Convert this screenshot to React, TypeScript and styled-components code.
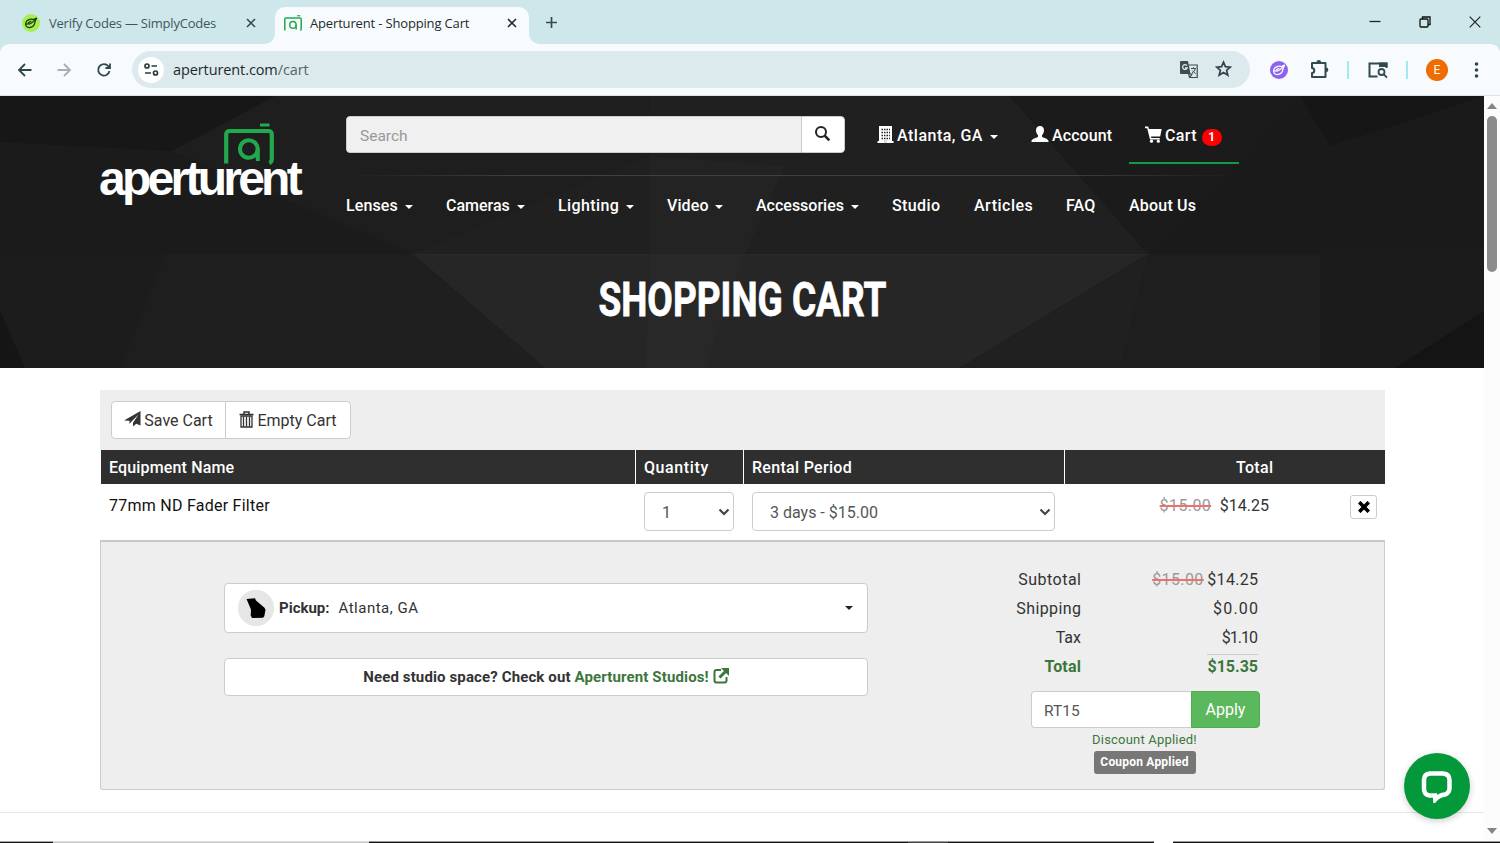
import React from "react";
import styled, { createGlobalStyle } from "styled-components";

const Global = createGlobalStyle`
  *, *::before, *::after { box-sizing: border-box; }
  html, body { margin: 0; padding: 0; overflow: hidden; background: #fff; }
  input, select, button { font: inherit; }
`;

const Window = styled.div`
  width: 1500px;
  height: 843px;
  overflow: hidden;
  display: flex;
  flex-direction: column;
  font-family: Roboto, "Liberation Sans", sans-serif;
  font-size: 16px;
  line-height: 20px;
  color: #333;
`;

const Txt = styled.span<{ $ls?: number }>`
  letter-spacing: ${(p) => p.$ls ?? 0}px;
  margin-right: ${(p) => -(p.$ls ?? 0)}px;
  white-space: nowrap;
`;

/* ---------- browser frame ---------- */

const TabStrip = styled.div`
  height: 44px;
  flex: none;
  display: flex;
  align-items: flex-end;
  background: #cee7eb;
  font-family: "Open Sans", "Noto Sans", sans-serif;
  font-size: 13px;
`;

const Tab = styled.div<{ $active?: boolean; $w: number }>`
  position: relative;
  width: ${(p) => p.$w}px;
  height: 37px;
  padding: 0 ${(p) => (p.$active ? 12 : 19)}px 5px ${(p) => (p.$active ? 9 : 22)}px;
  display: flex;
  align-items: center;
  color: ${(p) => (p.$active ? "#1f2b2e" : "#41565b")};
  background: ${(p) => (p.$active ? "#f7fbfd" : "transparent")};
  border-radius: 10px 10px 0 0;
  svg { flex: none; }
  &::before, &::after {
    content: ${(p) => (p.$active ? '""' : "none")};
    position: absolute;
    bottom: 0;
    width: 10px;
    height: 10px;
  }
  &::before { left: -10px; background: radial-gradient(circle at 0 0, transparent 9.5px, #f7fbfd 10px); }
  &::after { right: -10px; background: radial-gradient(circle at 100% 0, transparent 9.5px, #f7fbfd 10px); }
`;

const TabTitle = styled.span<{ $ls: number; $gap: number }>`
  flex: 1;
  margin-left: ${(p) => p.$gap}px;
  letter-spacing: ${(p) => p.$ls}px;
  white-space: nowrap;
`;

const StripButtons = styled.div`
  flex: 1;
  height: 44px;
  display: flex;
  align-items: center;
  padding-left: 16px;
`;

const WinButtons = styled.div`
  margin-left: auto;
  margin-right: 19px;
  display: flex;
  align-items: center;
  gap: 38px;
`;

const ToolbarBack = styled.div`
  flex: none;
  background: #cee7eb;
`;

const Toolbar = styled.div`
  height: 52px;
  display: flex;
  align-items: center;
  padding: 0 17px 0 17px;
  background: #f7fbfd;
  border-bottom: 1px solid #dbe1e5;
  border-radius: 9px 9px 0 0;
`;

const NavIcons = styled.div`
  display: flex;
  gap: 23px;
  width: 115px;
  svg:last-child { margin-left: 1px; }
`;

const UrlBar = styled.div`
  width: 1118px;
  height: 37px;
  border-radius: 19px;
  background: #dce9ed;
  display: flex;
  align-items: center;
  padding: 0 18px 0 6px;
  font-family: "Open Sans", "Noto Sans", sans-serif;
  font-size: 14.5px;
  color: #1c2a2d;
  em { font-style: normal; color: #566; }
`;

const SiteInfo = styled.div`
  width: 26px;
  height: 26px;
  border-radius: 50%;
  background: #fff;
  display: flex;
  align-items: center;
  justify-content: center;
  margin-right: 9px;
`;

const UrlActions = styled.div`
  margin-left: auto;
  display: flex;
  gap: 16px;
`;

const Extensions = styled.div`
  flex: 1;
  display: flex;
  align-items: center;
  padding-left: 20px;
`;

const ExtGap = styled.span<{ $w: number }>`
  flex: none;
  width: ${(p) => p.$w}px;
`;

const Divider = styled.i`
  width: 2px;
  height: 18px;
  background: #a5e8f5;
`;

const Avatar = styled.div`
  width: 22px;
  height: 22px;
  border-radius: 50%;
  background: #ee6c02;
  color: #fff;
  font-size: 12px;
  line-height: 22px;
  text-align: center;
`;

/* ---------- page ---------- */

const Viewport = styled.div`
  flex: 1;
  min-height: 0;
  display: flex;
`;

const Page = styled.main`
  width: 1484px;
  background: #fff;
`;

const Hero = styled.header`
  position: relative;
  height: 272px;
  background: #1b1b1b;
  color: #fff;
  overflow: hidden;
`;

const Facets = styled.svg`
  position: absolute;
  inset: 0;
`;

const HeroContent = styled.div`
  position: relative;
  display: grid;
  grid-template-columns: 246px 1fr;
  padding-left: 100px;
  height: 158px;
`;

const Logo = styled.div`
  padding-top: 27px;
  display: flex;
  flex-direction: column;
  svg { margin-left: 124px; }
`;

const LogoWord = styled.div`
  font: bold 48px/50px "Liberation Sans", Arial, sans-serif;
  letter-spacing: -3.75px;
  margin: -11px 0 0 -1px;
`;

const NavColumn = styled.div`
  padding-top: 20px;
`;

const TopRow = styled.div`
  display: flex;
  height: 59px;
  align-items: flex-start;
`;

const SearchGroup = styled.form`
  display: flex;
  width: 499px;
  height: 37px;
  border-radius: 4px;
  overflow: hidden;
`;

const SearchInput = styled.input`
  flex: 1;
  border: 1px solid #ccc;
  border-right: 0;
  border-radius: 4px 0 0 4px;
  background: #f0f0f0;
  padding: 3px 13px 0;
  font-size: 15.500px;
  outline: 0;
  &::placeholder { color: #999; opacity: 1; }
`;

const SearchButton = styled.button`
  width: 44px;
  padding: 0 2px 2px 0;
  border: 1px solid #ccc;
  border-radius: 0 4px 4px 0;
  background: #fff;
  display: flex;
  align-items: center;
  justify-content: center;
`;

const TopLink = styled.a<{ $w: number; $ml: number; $active?: boolean }>`
  width: ${(p) => p.$w}px;
  margin-left: ${(p) => p.$ml}px;
  height: 48px;
  display: flex;
  align-items: center;
  padding-bottom: 6px;
  font-weight: 500;
  padding-left: ${(p) => (p.$active ? 16 : 0)}px;
  border-bottom: 2px solid ${(p) => (p.$active ? "#139a44" : "transparent")};
  svg { margin: 0 3px 4px 0; flex: none; }
`;

const Count = styled.span`
  width: 20px;
  height: 17px;
  margin: 3px 0 0 5px;
  border-radius: 9px;
  background: #f00;
  font-size: 12px;
  font-weight: 700;
  line-height: 17px;
  text-align: center;
`;

const Caret = styled.i<{ $dark?: boolean; $push?: boolean }>`
  flex: none;
  margin-left: ${(p) => (p.$push ? "auto" : "0")};
  margin-top: ${(p) => (p.$dark ? 0 : 2)}px;
  border: 4.5px solid transparent;
  border-bottom: 0;
  border-top: 4px solid ${(p) => (p.$dark ? "#222" : "#fff")};
`;

const Rule = styled.div`
  width: 893px;
  height: 1px;
  background: linear-gradient(90deg, transparent, #404040 20%, #404040 80%, transparent);
`;

const Menu = styled.nav`
  display: flex;
  gap: 33px;
  padding-top: 20px;
  font-weight: 500;
`;

const MenuItem = styled.a<{ $w: number }>`
  width: ${(p) => p.$w}px;
  display: flex;
  align-items: center;
  justify-content: space-between;
`;

const Title = styled.h1`
  position: relative;
  margin: 16px 0 0 1px;
  text-align: center;
  font: 700 49px/60px Roboto, sans-serif;
  -webkit-text-stroke: 0.8px #fff;
  transform: scaleX(0.755);
`;

const Cart = styled.section`
  width: 1285px;
  margin: 22px 0 0 100px;
`;

const Actions = styled.div`
  height: 60px;
  background: #eee;
  padding: 11px;
  display: flex;
`;

const ActionButton = styled.button<{ $w: number; $last?: boolean }>`
  width: ${(p) => p.$w}px;
  height: 38px;
  padding: 1px 0 0;
  margin-left: ${(p) => (p.$last ? -1 : 0)}px;
  display: flex;
  align-items: center;
  justify-content: center;
  gap: 3px;
  border: 1px solid #ccc;
  border-radius: ${(p) => (p.$last ? "0 4px 4px 0" : "4px 0 0 4px")};
  background: #fff;
  color: #333;
  svg { margin-bottom: 3px; }
`;

const columns = "535px 108px 321px 1fr";

const HeadRow = styled.div`
  display: grid;
  grid-template-columns: ${columns};
  height: 34px;
  margin-left: 1px;
  color: #fff;
  font-weight: 500;
`;

const HeadCell = styled.div<{ $center?: boolean }>`
  background: #2f2f2f;
  padding: 8px 8px 0;
  border-right: 1px solid #fff;
  text-align: ${(p) => (p.$center ? "center" : "left")};
  &:last-child { border-right: 0; padding-left: 67px; }
`;

const ItemRow = styled.div`
  display: grid;
  grid-template-columns: ${columns};
  height: 56px;
  margin-left: 1px;
`;

const ItemCell = styled.div`
  padding: 8px 10px 0 8px;
`;

const ItemName = styled.div`
  padding-top: 4px;
  color: #111;
`;

const SelectBox = styled.div`
  height: 39px;
  border: 1px solid #ccc;
  border-radius: 4px;
  padding: 2px 3px 0 17px;
  display: flex;
  align-items: center;
  justify-content: space-between;
  color: #555;
  svg { margin-bottom: 2px; }
`;

const PriceCell = styled.div`
  display: flex;
  justify-content: flex-end;
  padding: 12px 8px 0 0;
`;

const Old = styled.s`
  color: #999;
  text-decoration: line-through #f0706c 1.5px;
  white-space: nowrap;
`;

const NewPrice = styled(Txt)`
  margin-left: 9px;
`;

const RemoveButton = styled.button`
  width: 27px;
  height: 24px;
  padding: 0;
  margin: -1px 0 0 81px;
  border: 1px solid #ccc;
  border-radius: 3px;
  background: #fff;
  display: flex;
  align-items: center;
  justify-content: center;
`;

const Panel = styled.div`
  height: 250px;
  border: 1px solid #ccc;
  border-top: 2px solid #c8c8c8;
  border-radius: 0 0 3px 3px;
  background: #eee;
  display: flex;
`;

const Delivery = styled.div`
  width: 644px;
  margin: 41px 0 0 123px;
`;

const White = styled.div<{ $h: number }>`
  height: ${(p) => p.$h}px;
  background: #fff;
  border: 1px solid #ccc;
  border-radius: 4px;
  display: flex;
  align-items: center;
`;

const Pickup = styled(White)`
  padding: 0 14px 0 13px;
  margin-bottom: 25px;
  font-size: 15px;
  b { margin: 0 9px 0 5px; }
  span { flex: 1; letter-spacing: 0.5px; }
`;

const StateBadge = styled.div`
  width: 36px;
  height: 36px;
  border-radius: 50%;
  background: #e6e6e6;
  display: flex;
  align-items: center;
  justify-content: center;
`;

const Studios = styled(White)`
  justify-content: center;
  font-weight: 700;
  font-size: 15px;
  letter-spacing: 0.13px;
  a { color: #3c763d; margin: 0 4px 0 4px; }
  svg { margin-bottom: 3px; }
`;

const Summary = styled.div`
  width: 260px;
  margin: 24px 0 0 132px;
`;

const SumLine = styled.div<{ $total?: boolean }>`
  display: grid;
  grid-template-columns: 81px 177px;
  height: 29px;
  padding-top: 4px;
  text-align: right;
  justify-items: end;
  font-weight: ${(p) => (p.$total ? 700 : 400)};
  color: ${(p) => (p.$total ? "#3c763d" : "#333")};
  > :last-child {
    border-top: ${(p) => (p.$total ? "1px solid #ccc" : "0")};
    margin-top: ${(p) => (p.$total ? -3 : 0)}px;
    padding-top: ${(p) => (p.$total ? 2 : 0)}px;
    height: 22px;
  }
`;

const Coupon = styled.div`
  display: flex;
  width: 229px;
  height: 37px;
  margin: 9px 0 0 31px;
`;

const CouponField = styled.div`
  flex: 1;
  border: 1px solid #ccc;
  border-right: 0;
  border-radius: 4px 0 0 4px;
  background: #fff;
  color: #555;
  font-size: 15.500px;
  padding: 9px 12px;
`;

const Apply = styled.button`
  width: 69px;
  padding: 1px 0 0;
  border: 1px solid #4cae4c;
  border-radius: 0 4px 4px 0;
  background: #5cb85c;
  color: #fff;
`;

const Result = styled.div`
  width: 229px;
  margin: 3px 0 0 30px;
  display: flex;
  flex-direction: column;
  align-items: center;
  font-size: 13px;
  line-height: 18px;
  color: #3c763d;
  letter-spacing: 0.2px;
`;

const Badge = styled.div`
  width: 102px;
  height: 23px;
  margin-top: 2px;
  border-radius: 3px;
  background: #777;
  color: #fff;
  font-size: 12px;
  font-weight: 700;
  line-height: 23px;
  text-align: center;
`;

const Footer = styled.div`
  height: 1px;
  margin-top: 22px;
  background: #e7e7e7;
`;

const Chat = styled.button`
  position: fixed;
  left: 1404px;
  top: 753px;
  width: 66px;
  height: 66px;
  padding: 0;
  border: 0;
  border-radius: 50%;
  background: #03993a;
  box-shadow: 0 2px 7px rgba(0, 0, 0, 0.2);
  display: flex;
  align-items: center;
  justify-content: center;
`;

const Scrollbar = styled.div`
  width: 16px;
  background: #fcfcfc;
  display: flex;
  flex-direction: column;
  align-items: center;
  padding: 7px 0 9px;
  svg { margin-top: auto; }
  svg:first-child { margin-top: 0; }
`;

const Thumb = styled.div`
  width: 10px;
  height: 156px;
  margin-top: 7px;
  border-radius: 5px;
  background: #8b8b8b;
`;

const BottomEdge = styled.div`
  position: fixed;
  left: 0;
  top: 841px;
  width: 1500px;
  height: 2px;
  display: flex;
`;

const Edge = styled.i<{ $w: number; $a: string; $b: string }>`
  width: ${(p) => p.$w}px;
  border-top: 1px solid ${(p) => p.$a};
  background: ${(p) => p.$b};
`;

/* ---------- drawings ---------- */

const Leaf = ({ size, bg, fg }: { size: number; bg: string; fg: string }) => (
  <svg width={size} height={size} viewBox="0 0 18 18" fill="none">
    <circle cx="9" cy="9" r="9" fill={bg} />
    <path d="M14.500 4.200L11.500 5.600C9.500 4.500 6 5.300 4.600 7.200C3.200 9.100 3.400 12 5.200 13C7.700 14.300 11.400 13 12.400 10.300C12.900 8.800 12.700 7.300 14.500 4.200z" stroke={fg} strokeWidth="1.300" strokeLinejoin="round" />
    <path d="M3.500 10.300L6 9.600C7.300 11 9.500 9.300 12.500 6.300M6.500 8.600L9 7.300" stroke={fg} strokeWidth="1.200" strokeLinecap="round" />
  </svg>
);

const Camera = ({ w, h }: { w: number; h: number }) => (
  <svg width={w} height={h} viewBox="0 0 50 42" fill="none" stroke="#22a94e" preserveAspectRatio="none">
    <path d="M2.200 40.500V11.500Q2.200 8 5.700 8H44.300Q47.800 8 47.800 11.500V36Q47.800 39 45.300 40" strokeWidth="4.200" />
    <path d="M36 2h9.500" strokeWidth="3" />
    <circle cx="24.800" cy="26" r="8.800" strokeWidth="4" />
    <path d="M33.800 25v13" strokeWidth="4" />
  </svg>
);

const Close = ({ c, s = 10, w = 1.6 }: { c: string; s?: number; w?: number }) => (
  <svg width={s} height={s} viewBox="0 0 10 10" stroke={c} strokeWidth={w}><path d="M1 1l8 8M9 1L1 9" /></svg>
);

const Chevron = () => (
  <svg width="12" height="8" viewBox="0 0 12 8" fill="none" stroke="#444" strokeWidth="2.200"><path d="M1.500 1.500L6 6l4.500-4.500" /></svg>
);

const menu: [string, number, boolean, number][] = [
  ["Lenses", 67, true, 0.1], ["Cameras", 79, true, 0], ["Lighting", 76, true, 0.4], ["Video", 56, true, 0.1],
  ["Accessories", 103, true, 0], ["Studio", 49, false, 0.4], ["Articles", 59, false, 0.5], ["FAQ", 30, false, 0.2], ["About Us", 68, false, 0.2],
];

export default function App() {
  return (
    <Window>
      <Global />
      <TabStrip>
        <Tab $w={275}>
          <Leaf size={18} bg="#a5ef50" fg="#1d3a10" />
          <TabTitle $ls={-0.22} $gap={9}>Verify Codes — SimplyCodes</TabTitle>
          <Close c="#334a50" />
        </Tab>
        <Tab $active $w={254}>
          <Camera w={18} h={16} />
          <TabTitle $ls={-0.16} $gap={8}>Aperturent - Shopping Cart</TabTitle>
          <Close c="#1d2b2f" />
        </Tab>
        <StripButtons>
          <svg width="13" height="13" viewBox="0 0 13 13" stroke="#354b50" strokeWidth="1.700"><path d="M6.500 1v11M1 6.500h11" /></svg>
          <WinButtons>
            <svg width="12" height="12" viewBox="0 0 12 12" stroke="#222"><path d="M.5 5.500h11" strokeWidth="1.300" /></svg>
            <svg width="12" height="12" viewBox="0 0 12 12" fill="none" stroke="#111" strokeWidth="1.300"><rect x="1" y="3" width="8" height="8" rx="1" /><path d="M3.500 3V1H11v7.500H9" /></svg>
            <svg width="12" height="12" viewBox="0 0 12 12" stroke="#222" strokeWidth="1.200"><path d="M.7.7l10.600 10.600M11.300.7L.7 11.300" /></svg>
          </WinButtons>
        </StripButtons>
      </TabStrip>
      <ToolbarBack>
        <Toolbar>
          <NavIcons>
            <svg width="16" height="16" viewBox="0 0 16 16" fill="none" stroke="#2f474c" strokeWidth="1.800"><path d="M14.500 8H2M8 2L2 8l6 6" /></svg>
            <svg width="16" height="16" viewBox="0 0 16 16" fill="none" stroke="#a7b0b3" strokeWidth="1.800"><path d="M1.500 8H14M8 2l6 6-6 6" /></svg>
            <svg width="16" height="16" viewBox="0 0 16 16" fill="none" stroke="#2f474c" strokeWidth="1.800"><path d="M13.500 9A5.700 5.700 0 1 1 12.300 4.200L14 6M14 1.500V6H9.500" /></svg>
          </NavIcons>
          <UrlBar>
            <SiteInfo>
              <svg width="15" height="13" viewBox="0 0 15 13" fill="none" stroke="#2b3a3d" strokeWidth="1.700"><circle cx="3" cy="3" r="2" /><path d="M7.500 3H13M1 10h6" /><circle cx="11.500" cy="10" r="2" /></svg>
            </SiteInfo>
            <Txt $ls={-0.1}>aperturent.com<em>/cart</em></Txt>
            <UrlActions>
              <svg width="20" height="19" viewBox="0 0 20 19">
                <path d="M2 1h7l2.500 13H2a1 1 0 0 1-1-1V2a1 1 0 0 1 1-1z" fill="#3c4c50" />
                <path d="M9.500 5h8.700v12.500h-7.500L9.500 14M10 14h3l-2.300 3.500" fill="none" stroke="#3c4c50" strokeWidth="1.200" />
                <path d="M12 8.500h5M14.500 7.300v1.200M16.300 8.500c-.4 2-1.700 3.500-3.300 4.500M13.300 10.500l3.500 3.500" fill="none" stroke="#3c4c50" />
                <path d="M8 5.700A2.400 2.400 0 1 0 8.300 7.800H6" fill="none" stroke="#e5eff2" strokeWidth="1.200" />
              </svg>
              <svg width="17" height="17" viewBox="0 0 17 17" fill="none" stroke="#30454a" strokeWidth="1.700"><path d="M8.500 2.200l1.900 4.500 4.900.4-3.700 3.200 1.200 4.800-4.300-2.600-4.300 2.600 1.200-4.800-3.700-3.200 4.900-.4z" /></svg>
            </UrlActions>
          </UrlBar>
          <Extensions>
            <Leaf size={18} bg="#8d62ef" fg="#fff" />
            <ExtGap $w={22} />
            <svg width="19" height="19" viewBox="0 0 19 19" fill="none"><path d="M2 3h13.500v14H2v-4c3 0 3-5 0-5z" stroke="#304a4f" strokeWidth="2" strokeLinejoin="round" /><path d="M6.500 2.300a2.300 2.300 0 0 1 4.600 0zM16 7.500a2.300 2.300 0 0 1 0 4.700z" fill="#304a4f" /></svg>
            <ExtGap $w={18} />
            <Divider />
            <ExtGap $w={19} />
            <svg width="20" height="18" viewBox="0 0 20 18" fill="none" stroke="#304a4f"><path d="M9.500 15.500H1.500v-13h17V7" strokeWidth="2" /><path d="M11 1.500h8.500V6H11z" fill="#304a4f" stroke="none" /><circle cx="13.500" cy="11" r="3" strokeWidth="1.800" /><path d="M15.600 13.200l3.400 3.500" strokeWidth="1.800" /></svg>
            <ExtGap $w={18} />
            <Divider />
            <ExtGap $w={18} />
            <Avatar>E</Avatar>
            <ExtGap $w={22} />
            <svg width="13" height="18" viewBox="0 0 13 18" fill="#2f474c"><circle cx="6.500" cy="3" r="1.800" /><circle cx="6.500" cy="9" r="1.800" /><circle cx="6.500" cy="15" r="1.800" /></svg>
          </Extensions>
        </Toolbar>
      </ToolbarBack>

      <Viewport>
        <Page>
          <Hero>
            <Facets width="1484" height="272" viewBox="0 0 1484 272">
              <path d="M0 0H275L172 55L0 46z" fill="#171717" />
              <path d="M275 0H650V158H413L172 55z" fill="#1e1e1e" />
              <path d="M650 0H1010L1148 158H413L650 60z" fill="#202020" />
              <path d="M1010 0H1484V158H1148z" fill="#1a1a1a" />
              <path d="M1010 0L1148 158L1235 70L1300 0z" fill="#1b1b1b" />
              <path d="M1300 0H1484L1330 50z" fill="#161616" />
              <path d="M0 158H413L545 272H0z" fill="#1c1c1c" />
              <path d="M165 158H413V272H120z" fill="#1e1e1e" />
              <path d="M413 158L545 272H413z" fill="#1f1f1f" />
              <path d="M413 158H1148L960 272H545z" fill="#262626" />
              <path d="M650 158H745L705 272H645z" fill="#282828" />
              <path d="M650 60L785 70L745 158H650z" fill="#232323" />
              <path d="M1148 158H1320V272H960z" fill="#1e1e1e" />
              <path d="M1148 158L1120 272H960z" fill="#202020" />
              <path d="M1320 158H1484V272H1320z" fill="#1b1b1b" />
              <path d="M1484 215V272H1395z" fill="#141414" />
              <path d="M0 215L25 272H0z" fill="#151515" />
              <path d="M413 158.500H1148" stroke="#292929" />
            </Facets>
            <HeroContent>
              <Logo>
                <Camera w={50} h={42} />
                <LogoWord>aperturent</LogoWord>
              </Logo>
              <NavColumn>
                <TopRow>
                  <SearchGroup>
                    <SearchInput placeholder="Search" />
                    <SearchButton type="button">
                      <svg width="17" height="17" viewBox="0 0 17 17" fill="none" stroke="#222"><circle cx="7" cy="7" r="5" strokeWidth="2" /><path d="M10.700 10.700l4.600 4.600" strokeWidth="2.600" /></svg>
                    </SearchButton>
                  </SearchGroup>
                  <TopLink $w={121} $ml={32}>
                    <svg width="17" height="17" viewBox="0 0 17 17"><path d="M2 0h13v15h1.500v2H.5v-2H2z" fill="#fff" /><path d="M4.500 3.500h8.500M4.500 6.500h8.500M4.500 9.500h8.500M4.500 12.500h8.500" stroke="#222" strokeWidth="1.300" strokeDasharray="1.500 1" /><path d="M7 14h3v3H7z" fill="#ddd" /></svg>
                    <Txt $ls={0.5}>Atlanta, GA</Txt><Caret $push />
                  </TopLink>
                  <TopLink $w={81} $ml={33}>
                    <svg width="18" height="16" viewBox="0 0 18 16"><path d="M9 0c2.700 0 4 1.800 4 4.300 0 2-.8 3.800-2 4.900v1.500c0 .9 6.500 1.700 6.500 4.300v1H.5v-1C.5 12.400 7 11.600 7 10.700V9.200C5.800 8.100 5 6.300 5 4.300 5 1.800 6.300 0 9 0z" fill="#fff" /></svg>
                    <Txt $ls={0.1}>Account</Txt>
                  </TopLink>
                  <TopLink $w={110} $ml={17} $active>
                    <svg width="17" height="17" viewBox="0 0 17 17" fill="#fff"><path d="M0 .5h3.200L4 3h12.700l-1.500 7.500H6l.4 1.500h8.400v1.600H5L2.200 2.200H0z" /><circle cx="6.500" cy="15.200" r="1.600" /><circle cx="13.300" cy="15.200" r="1.600" /></svg>
                    <Txt $ls={0.4}>Cart</Txt><Count>1</Count>
                  </TopLink>
                </TopRow>
                <Rule />
                <Menu>
                  {menu.map(([name, w, caret, ls]) => (
                    <MenuItem key={name} $w={w}><Txt $ls={ls}>{name}</Txt>{caret && <Caret />}</MenuItem>
                  ))}
                </Menu>
              </NavColumn>
            </HeroContent>
            <Title>SHOPPING CART</Title>
          </Hero>

          <Cart>
            <Actions>
              <ActionButton $w={115}>
                <svg width="17" height="16" viewBox="0 0 17 16"><path d="M16.500 0v14.500l-4.300-1.800L9 15.500v-3.700L14.500 3.500 7.500 10.500 5.500 13V9.800L0 9.500z" fill="#333" /></svg>
                <Txt $ls={0}>Save Cart</Txt>
              </ActionButton>
              <ActionButton $w={126} $last>
                <svg width="15" height="17" viewBox="0 0 15 17" fill="none" stroke="#333"><path d="M.5 3.500h14M5 3V1h5v2" strokeWidth="1.500" /><path d="M2 5h11v11H2z" strokeWidth="1.300" /><path d="M4.500 5.500v10M7.500 5.500v10M10.500 5.500v10" strokeWidth="1.300" /></svg>
                <Txt $ls={0}>Empty Cart</Txt>
              </ActionButton>
            </Actions>
            <HeadRow>
              <HeadCell><Txt $ls={0.15}>Equipment Name</Txt></HeadCell>
              <HeadCell><Txt $ls={0.6}>Quantity</Txt></HeadCell>
              <HeadCell><Txt $ls={0.3}>Rental Period</Txt></HeadCell>
              <HeadCell $center><Txt $ls={0.3}>Total</Txt></HeadCell>
            </HeadRow>
            <ItemRow>
              <ItemCell><ItemName><Txt $ls={0.25}>77mm ND Fader Filter</Txt></ItemName></ItemCell>
              <ItemCell><SelectBox><Txt>1</Txt><Chevron /></SelectBox></ItemCell>
              <ItemCell><SelectBox><Txt $ls={0}>3 days - $15.00</Txt><Chevron /></SelectBox></ItemCell>
              <PriceCell>
                <Old><Txt $ls={0.4}>$15.00</Txt></Old>
                <NewPrice>$14.25</NewPrice>
                <RemoveButton><Close c="#000" s={12} w={3} /></RemoveButton>
              </PriceCell>
            </ItemRow>
            <Panel>
              <Delivery>
                <Pickup $h={50}>
                  <StateBadge>
                    <svg width="20" height="20" viewBox="0 0 20 20"><path d="M.5 1l8.500-.8 1 2.300 8.500 7.300 1 2-1.200 6.400-1.300 1.500-11 .3-1.300-2.500.3-6z" fill="#000" /></svg>
                  </StateBadge>
                  <b>Pickup:</b><span>Atlanta, GA</span><Caret $dark />
                </Pickup>
                <Studios $h={38}>
                  <Txt $ls={0.13}>Need studio space? Check out</Txt><a>Aperturent Studios!</a>
                  <svg width="16" height="16" viewBox="0 0 16 16" fill="none" stroke="#3c763d"><path d="M8 2H3.500Q1.500 2 1.500 4v8.500q0 2 2 2h8q2 0 2-2V9" strokeWidth="2" /><path d="M6.500 9.500L13 3" strokeWidth="3" /><path d="M8 0H16v8z" fill="#3c763d" stroke="none" /></svg>
                </Studios>
              </Delivery>
              <Summary>
                <SumLine><Txt $ls={0.5}>Subtotal</Txt><span><Old><Txt $ls={0.4}>$15.00</Txt></Old> <Txt $ls={0.3}>$14.25</Txt></span></SumLine>
                <SumLine><Txt $ls={0.4}>Shipping</Txt><Txt $ls={1.2}>$0.00</Txt></SumLine>
                <SumLine><Txt $ls={0}>Tax</Txt><Txt $ls={-1}>$1.10</Txt></SumLine>
                <SumLine $total><Txt $ls={0.2}>Total</Txt><span>$15.35</span></SumLine>
                <Coupon><CouponField>RT15</CouponField><Apply>Apply</Apply></Coupon>
                <Result>Discount Applied!<Badge>Coupon Applied</Badge></Result>
              </Summary>
            </Panel>
          </Cart>
          <Footer />
        </Page>
        <Scrollbar>
          <svg width="10" height="6" viewBox="0 0 10 6"><path d="M5 0l5 6H0z" fill="#858585" /></svg>
          <Thumb />
          <svg width="10" height="6" viewBox="0 0 10 6"><path d="M0 0h10L5 6z" fill="#858585" /></svg>
        </Scrollbar>
      </Viewport>
      <Chat aria-label="Chat">
        <svg width="34" height="34" viewBox="0 0 34 34" fill="none" stroke="#fff" strokeWidth="4.500"><path d="M15 26.500H9.500Q4 25.500 4 20V11Q4 5 10 4.500H23Q29.500 5 29.500 11V19Q29.500 24 25 25.500Q19.500 26 15.300 30.500z" strokeLinejoin="miter" /></svg>
      </Chat>
      <BottomEdge>
        <Edge $w={53} $a="#aaa" $b="#111" />
        <Edge $w={316} $a="#ddd" $b="#c9c9c9" />
        <Edge $w={539} $a="#999" $b="#111" />
        <Edge $w={40} $a="#999" $b="#444" />
        <Edge $w={206} $a="#999" $b="#111" />
        <Edge $w={19} $a="#fff" $b="#fff" />
        <Edge $w={327} $a="#999" $b="#111" />
      </BottomEdge>
    </Window>
  );
}
